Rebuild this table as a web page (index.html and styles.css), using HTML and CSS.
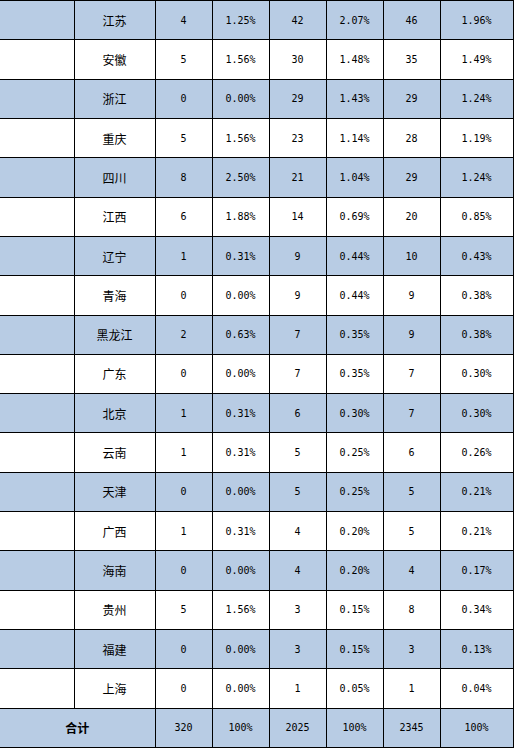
FILE: index.html
```html
<!DOCTYPE html>
<html lang="zh">
<head>
<meta charset="utf-8">
<title>各省统计</title>
<link rel="stylesheet" href="styles.css">
</head>
<body>
<table class="stats">
  <colgroup>
    <col class="c-blank"><col class="c-name"><col class="c-num"><col class="c-num"><col class="c-num"><col class="c-num"><col class="c-num"><col class="c-last">
  </colgroup>
  <tbody>
    <tr class="alt"><td></td><td class="name">江苏</td><td>4</td><td>1.25%</td><td>42</td><td>2.07%</td><td>46</td><td>1.96%</td></tr>
    <tr><td></td><td class="name">安徽</td><td>5</td><td>1.56%</td><td>30</td><td>1.48%</td><td>35</td><td>1.49%</td></tr>
    <tr class="alt"><td></td><td class="name">浙江</td><td>0</td><td>0.00%</td><td>29</td><td>1.43%</td><td>29</td><td>1.24%</td></tr>
    <tr><td></td><td class="name">重庆</td><td>5</td><td>1.56%</td><td>23</td><td>1.14%</td><td>28</td><td>1.19%</td></tr>
    <tr class="alt"><td></td><td class="name">四川</td><td>8</td><td>2.50%</td><td>21</td><td>1.04%</td><td>29</td><td>1.24%</td></tr>
    <tr><td></td><td class="name">江西</td><td>6</td><td>1.88%</td><td>14</td><td>0.69%</td><td>20</td><td>0.85%</td></tr>
    <tr class="alt"><td></td><td class="name">辽宁</td><td>1</td><td>0.31%</td><td>9</td><td>0.44%</td><td>10</td><td>0.43%</td></tr>
    <tr><td></td><td class="name">青海</td><td>0</td><td>0.00%</td><td>9</td><td>0.44%</td><td>9</td><td>0.38%</td></tr>
    <tr class="alt"><td></td><td class="name">黑龙江</td><td>2</td><td>0.63%</td><td>7</td><td>0.35%</td><td>9</td><td>0.38%</td></tr>
    <tr><td></td><td class="name">广东</td><td>0</td><td>0.00%</td><td>7</td><td>0.35%</td><td>7</td><td>0.30%</td></tr>
    <tr class="alt"><td></td><td class="name">北京</td><td>1</td><td>0.31%</td><td>6</td><td>0.30%</td><td>7</td><td>0.30%</td></tr>
    <tr><td></td><td class="name">云南</td><td>1</td><td>0.31%</td><td>5</td><td>0.25%</td><td>6</td><td>0.26%</td></tr>
    <tr class="alt"><td></td><td class="name">天津</td><td>0</td><td>0.00%</td><td>5</td><td>0.25%</td><td>5</td><td>0.21%</td></tr>
    <tr><td></td><td class="name">广西</td><td>1</td><td>0.31%</td><td>4</td><td>0.20%</td><td>5</td><td>0.21%</td></tr>
    <tr class="alt"><td></td><td class="name">海南</td><td>0</td><td>0.00%</td><td>4</td><td>0.20%</td><td>4</td><td>0.17%</td></tr>
    <tr><td></td><td class="name">贵州</td><td>5</td><td>1.56%</td><td>3</td><td>0.15%</td><td>8</td><td>0.34%</td></tr>
    <tr class="alt"><td></td><td class="name">福建</td><td>0</td><td>0.00%</td><td>3</td><td>0.15%</td><td>3</td><td>0.13%</td></tr>
    <tr><td></td><td class="name">上海</td><td>0</td><td>0.00%</td><td>1</td><td>0.05%</td><td>1</td><td>0.04%</td></tr>
    <tr class="alt total"><td colspan="2" class="name sum">合计</td><td>320</td><td>100%</td><td>2025</td><td>100%</td><td>2345</td><td>100%</td></tr>
  </tbody>
</table>
</body>
</html>
```
FILE: styles.css
```css
html, body {
  margin: 0;
  padding: 0;
  background: #ffffff;
}

.stats {
  border-collapse: collapse;
  table-layout: fixed;
  width: 513px;
  height: 748px;
  font-family: "DejaVu Sans Mono", "Liberation Mono", monospace;
  font-size: 10px;
  color: #000;
}

.c-blank { width: 74px; }
.c-name { width: 81px; }
.c-num { width: 57px; }
.c-last { width: 73px; }

.stats td {
  border: 1px solid #000;
  padding: 0;
  height: 38px;
  text-align: center;
  vertical-align: middle;
  white-space: nowrap;
}

.stats td:first-child {
  border-left: none;
}

.stats tr.alt td {
  background: #b8cce4;
}

.stats td.name {
  font-family: "Noto Sans CJK SC", "Noto Sans", sans-serif;
  font-size: 12px;
}

.stats td.sum {
  font-weight: bold;
}
```
